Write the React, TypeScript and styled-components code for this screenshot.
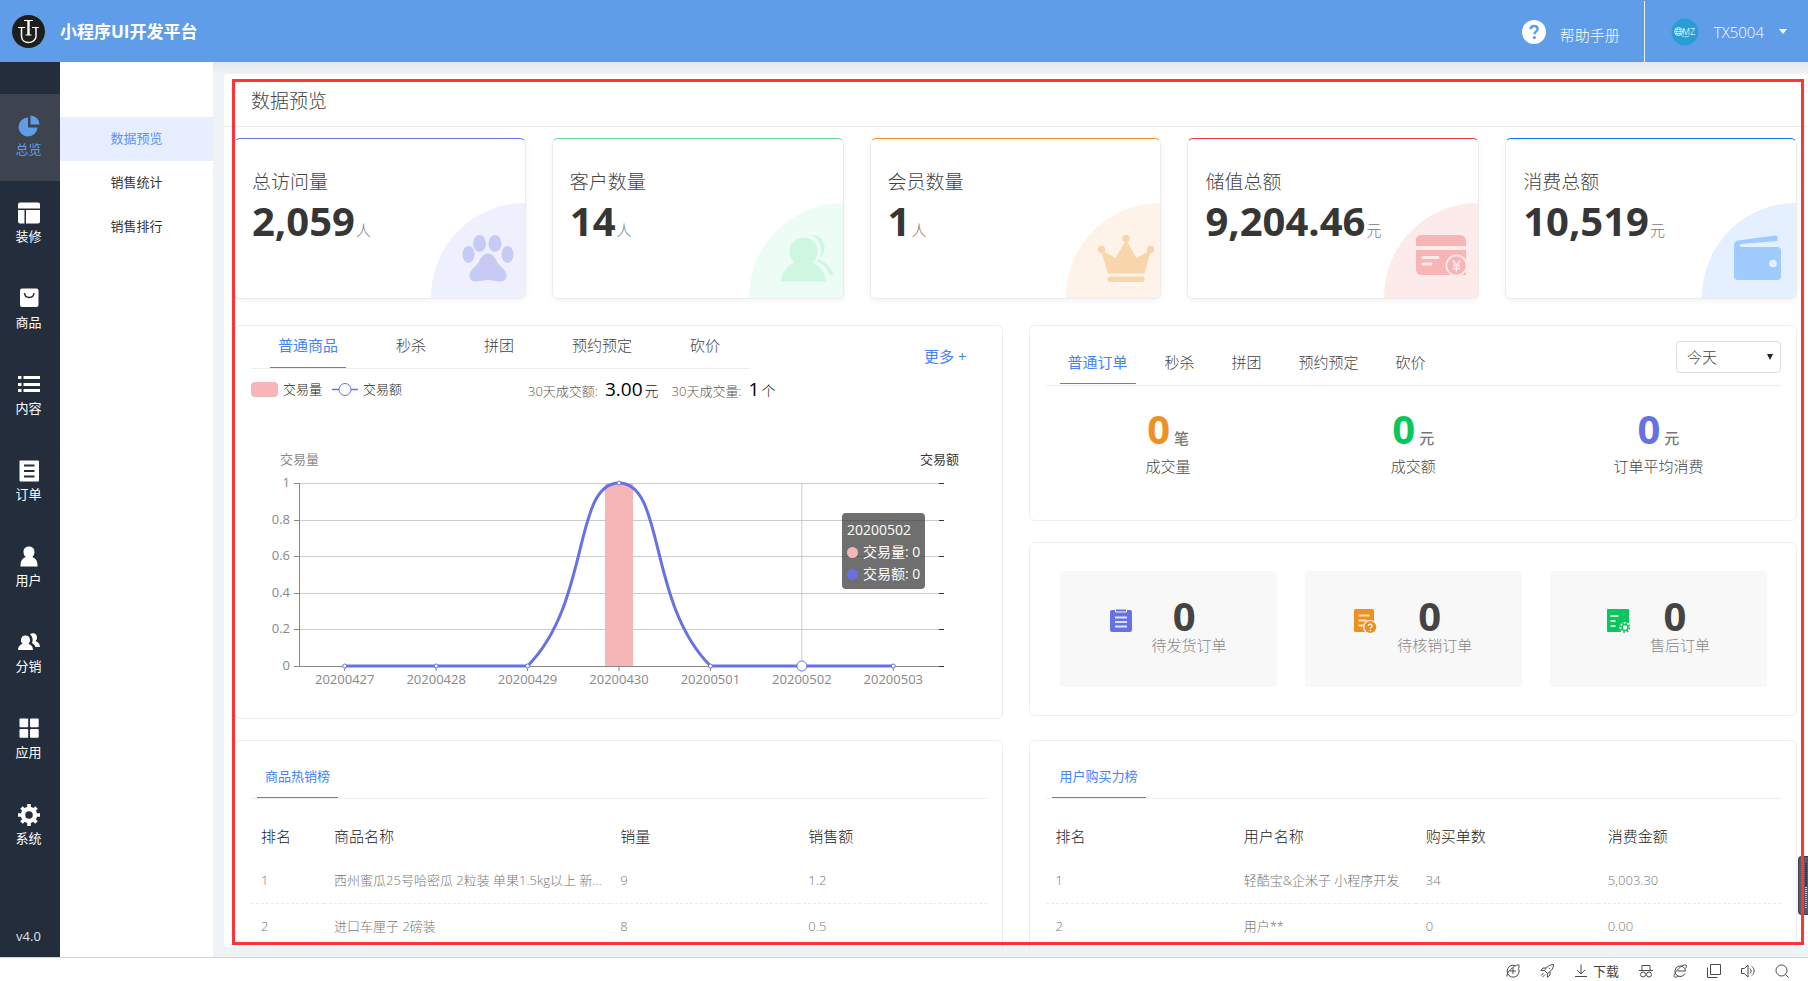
import React from 'react';
import styled, { createGlobalStyle } from 'styled-components';

const GlobalStyle = createGlobalStyle`
  * { box-sizing: border-box; }
  body {
    margin: 0;
    background: #fff;
    color: #333;
    font-family: 'Open Sans', 'Noto Sans CJK SC', sans-serif;
    font-size: 13px;
    font-weight: 300;
    line-height: 20px;
  }
  button, select { font: inherit; color: inherit; }
  a { text-decoration: none; color: inherit; }
  h1, h2, p { margin: 0; font-weight: inherit; }
`;

const Page = styled.div`
  display: flex;
  flex-direction: column;
  height: 100vh;
  min-width: 1200px;
  overflow: hidden;
`;

/* ---------- header ---------- */

const Header = styled.header`
  display: flex;
  align-items: center;
  flex: none;
  height: 62px;
  padding: 1px 21px 0 12px;
  background: #5f9de9;
  color: #fff;
`;

const BrandName = styled.h1`
  margin-left: 15px;
  font-size: 17px;
  font-weight: 700;
  line-height: 24px;
`;

const HelpLink = styled.a`
  display: flex;
  align-items: center;
  gap: 14px;
  height: 61px;
  margin-left: auto;
  padding-right: 24px;
  border-right: 1px solid #e9f1fb;
  font-size: 15px;
`;

const HelpText = styled.span`
  padding-top: 6px;
`;

const AccountButton = styled.button`
  display: flex;
  align-items: center;
  gap: 15px;
  height: 61px;
  padding: 0 0 0 26px;
  border: 0;
  background: none;
  font-size: 15px;
  color: #fff;
`;

const Caret = styled.span`
  border: 4px solid transparent;
  border-top: 5px solid #fff;
  border-bottom: 0;
`;

/* ---------- body columns ---------- */

const Body = styled.div`
  display: flex;
  flex: 1;
  min-height: 0;
`;

const Rail = styled.nav`
  display: flex;
  flex-direction: column;
  flex: none;
  width: 60px;
  padding-top: 32px;
  background: #242d3c;
  color: #fff;
`;

const RailItem = styled.a<{ $active?: boolean }>`
  display: flex;
  flex-direction: column;
  align-items: center;
  height: ${p => (p.$active ? 87 : 86)}px;
  padding: 20px 3px 0 0;
  font-weight: 400;
  background: ${p => (p.$active ? '#3e444f' : 'transparent')};
  color: ${p => (p.$active ? '#5f9de9' : '#fff')};
`;

const Version = styled.span`
  margin-top: auto;
  padding: 0 3px 11px 0;
  text-align: center;
  font-weight: 400;
  color: #dfe3ea;
`;

const SubMenu = styled.nav`
  flex: none;
  width: 153px;
  padding-top: 55px;
  background: #fff;
`;

const SubItem = styled.a<{ $active?: boolean }>`
  display: block;
  padding-bottom: 2px;
  line-height: 42px;
  text-align: center;
  font-weight: 400;
  background: ${p => (p.$active ? '#e7eeff' : 'transparent')};
  color: ${p => (p.$active ? '#5a94f9' : '#333')};
`;

const Main = styled.main`
  position: relative;
  flex: 1;
  min-width: 0;
  padding: 12px 0 10px 11px;
  background: linear-gradient(#e4e8ea, #eff3f5 12px);
`;

const Sheet = styled.div`
  height: 100%;
  overflow: hidden;
  border-radius: 4px;
  background: #fff;
`;

const Frame = styled.div`
  position: absolute;
  top: 17px;
  right: 4px;
  bottom: 12px;
  left: 19px;
  border: 3px solid #ff3434;
  pointer-events: none;
`;

const SideHandle = styled.div`
  position: absolute;
  right: 0;
  bottom: 42px;
  width: 10px;
  height: 59px;
  border: 1px solid #3a3f4c;
  border-right: 0;
  border-radius: 4px 0 0 4px;
  background: #565c6c;
`;

const SideBars = styled.div`
  width: 2px;
  height: 46px;
  margin: 6px 0 0 6px;
  background: repeating-linear-gradient(transparent 0 1px, #4a5060 1px 2px),
    linear-gradient(#2f3440 0 24px, #d6dc7c 24px 32px, #6fd6b4 32px);
`;

const SheetTitle = styled.h2`
  height: 53px;
  padding-left: 27px;
  border-bottom: 1px solid #ebebeb;
  font-size: 19px;
  line-height: 54px;
  color: #444;
`;

const Content = styled.div`
  padding: 11px 11px 0 10px;
`;

/* ---------- metric cards ---------- */

const MetricGrid = styled.div`
  display: grid;
  grid-template-columns: repeat(5, 1fr);
  gap: 26px;
`;

const MetricCard = styled.section<{ $accent: string }>`
  display: flex;
  height: 161px;
  padding-left: 17px;
  overflow: hidden;
  border: 1px solid #ececec;
  border-top-color: ${p => p.$accent};
  border-radius: 6px;
  box-shadow: 0 2px 6px rgba(0, 0, 0, 0.05);
`;

const MetricBody = styled.div`
  padding-top: 29px;
  white-space: nowrap;
`;

const MetricName = styled.p`
  font-size: 19px;
  line-height: 28px;
  color: #444;
`;

const BigNumber = styled.span<{ $color?: string }>`
  font-size: 40px;
  font-weight: 700;
  line-height: 50px;
  color: ${p => p.$color || '#363636'};
`;

const Unit = styled.span`
  margin-left: 1px;
  font-size: 15px;
  color: #777;
`;

const Quarter = styled.div<{ $tint: string }>`
  display: flex;
  align-items: flex-start;
  justify-content: flex-end;
  flex: none;
  align-self: flex-end;
  width: 94px;
  height: 95px;
  margin-left: auto;
  padding: 31px 5px 0 0;
  border-top-left-radius: 95px;
  background: ${p => p.$tint};
`;

/* ---------- panels ---------- */

const Columns = styled.div`
  display: grid;
  grid-template-columns: repeat(2, minmax(0, 1fr));
  align-items: start;
  gap: 21px 26px;
  margin-top: 26px;
`;

const Stack = styled.div`
  display: grid;
  gap: 21px;
`;

const Panel = styled.section<{ $height?: number }>`
  min-height: ${p => p.$height || 0}px;
  padding: 0 15px 0 16px;
  border: 1px solid #ededed;
  border-radius: 6px;
  background: #fff;
`;

const PanelHead = styled.div`
  display: flex;
  align-items: center;
  justify-content: space-between;
  padding-right: 20px;
`;

const TabList = styled.div<{ $gap: number; $lead: number; $width?: string }>`
  display: flex;
  align-items: flex-end;
  gap: ${p => p.$gap}px;
  width: ${p => p.$width || '100%'};
  padding-left: ${p => p.$lead}px;
  border-bottom: 1px solid #ededed;
`;

const Tab = styled.button<{ $active?: boolean; $height: number; $small?: boolean }>`
  height: ${p => p.$height}px;
  padding: ${p => (p.$small ? '14px 8px 0' : '0 8px 4px')};
  border: 0;
  border-bottom: 1px solid ${p => (p.$active ? '#4285f4' : 'transparent')};
  background: none;
  font-size: ${p => (p.$small ? 13 : 15)}px;
  font-weight: ${p => (p.$active ? 400 : 300)};
  line-height: 20px;
  white-space: nowrap;
  color: ${p => (p.$active ? '#4285f4' : '#444')};
`;

const MoreLink = styled.a`
  padding-top: 17px;
  font-size: 15px;
  font-weight: 400;
  color: #4285f4;
`;

const LegendRow = styled.div`
  display: flex;
  align-items: center;
  height: 42px;
  padding-bottom: 2px;
  white-space: nowrap;
`;

const LegendKey = styled.span`
  display: flex;
  align-items: center;
  gap: 5px;
  margin-right: 10px;
  color: #222;
`;

const Swatch = styled.i`
  width: 27px;
  height: 15px;
  border-radius: 4px;
  background: #f6b5b6;
`;

const Summary = styled.p`
  display: flex;
  align-items: baseline;
  margin-left: 116px;
  padding-top: 2px;
  color: #555;
`;

const SummaryValue = styled.b`
  margin: 0 2px 0 7px;
  font-size: 19px;
  font-weight: 400;
  color: #000;
`;

const SummaryUnit = styled.span`
  margin-right: 13px;
  font-size: 14px;
  color: #222;
`;

const ChartBox = styled.div`
  position: relative;
`;

const ChartSvg = styled.svg`
  display: block;
  width: 735px;
  max-width: 100%;
  font-family: 'Open Sans', 'Noto Sans CJK SC', sans-serif;
  font-size: 13px;
  font-weight: 400;
`;

const Tooltip = styled.div`
  position: absolute;
  top: 102px;
  left: 591px;
  padding: 6px 5px 4px;
  border-radius: 4px;
  background: rgba(50, 50, 50, 0.7);
  font-size: 14px;
  font-weight: 400;
  line-height: 22px;
  white-space: nowrap;
  color: #fff;
`;

const TipLine = styled.div`
  display: flex;
  align-items: center;
  gap: 5px;
`;

const Dot = styled.i<{ $color: string }>`
  width: 11px;
  height: 11px;
  border-radius: 50%;
  background: ${p => p.$color};
`;

/* ---------- order panels ---------- */

const OrderHead = styled.div`
  display: flex;
  align-items: flex-start;
  justify-content: space-between;
  height: 60px;
  padding-top: 15px;
  border-bottom: 1px solid #ededed;
`;

const OrderTabs = styled.div`
  display: flex;
  gap: 21px;
  padding: 3px 0 0 14px;
`;

const RangeSelect = styled.select`
  width: 105px;
  height: 32px;
  padding: 0 10px;
  appearance: none;
  border: 1px solid #dcdfe0;
  border-radius: 4px;
  background: transparent;
  font-size: 15px;
  color: #444;
`;

const SelectWrap = styled.label`
  position: relative;
  &::after {
    content: '';
    position: absolute;
    top: 13px;
    right: 8px;
    border: 3px solid transparent;
    border-top: 6px solid #222;
    border-bottom: 0;
  }
`;

const Thirds = styled.div`
  display: grid;
  grid-template-columns: repeat(3, 1fr);
`;

const OrderStat = styled.div`
  padding-top: 18px;
  text-align: center;
  font-size: 15px;
  color: #444;
`;

const StatLabel = styled.p`
  margin-top: 2px;
`;

const StatUnit = styled.span`
  margin-left: 4px;
  font-weight: 500;
  color: #777;
`;

const Tile = styled.div`
  display: flex;
  align-items: flex-start;
  justify-content: center;
  gap: 20px;
  height: 116px;
  margin: 28px 14px 0;
  padding-top: 26px;
  border-radius: 4px;
  background: #f8f8f8;
  svg { margin-top: 11px; }
`;

const TileText = styled.div`
  text-align: center;
  font-size: 15px;
  line-height: 20px;
  color: #888;
`;

const TileNumber = styled.div`
  padding-right: 10px;
  font-size: 40px;
  font-weight: 700;
  line-height: 38px;
  color: #444;
`;

/* ---------- tables ---------- */

const Table = styled.table`
  width: 100%;
  margin-top: 15px;
  border-collapse: collapse;
  table-layout: fixed;
  color: #777;

  th, td {
    height: 45px;
    padding: 0 0 0 10px;
    overflow: hidden;
    text-align: left;
    text-overflow: ellipsis;
    white-space: nowrap;
    font-weight: 300;
  }
  th {
    height: 44px;
    font-size: 15px;
    color: #222;
  }
  td { border-bottom: 1px dashed #ebebeb; }
`;

/* ---------- bottom bar ---------- */

const StatusBar = styled.footer`
  display: flex;
  align-items: center;
  justify-content: flex-end;
  flex: none;
  gap: 20px;
  height: 24px;
  padding: 2px 19px 0 0;
  border-top: 1px solid #d0d4d6;
  background: #fff;
  color: #444;
  svg { display: block; }
`;

const ToolButton = styled.button`
  display: flex;
  align-items: center;
  gap: 5px;
  padding: 0;
  border: 0;
  background: none;
  font-weight: 400;
  line-height: 20px;
`;

/* ---------- icons ---------- */

const Logo = () => (
  <svg width="33" height="33" viewBox="0 0 33 33" aria-label="UI">
    <circle cx="16.5" cy="16.5" r="16.5" fill="#1e1e1e" />
    <g fill="none" stroke="#fff">
      <path d="M12 5.500h9M13.500 20h6" strokeWidth="1" />
      <path d="M16.500 5.500v14.500" strokeWidth="2.400" />
      <path d="M6 12.500h7M20 12.500h7" strokeWidth="1" />
      <path d="M9.500 12.500v8.500c0 4 3 6.500 7 6.500s7.500-2.500 7.500-6.500v-8.500" strokeWidth="1.500" />
    </g>
  </svg>
);

const HelpIcon = () => (
  <svg width="24" height="24" viewBox="0 0 24 24">
    <circle cx="12" cy="12" r="12" fill="#fff" />
    <path d="M8.600 9.300c0-2 1.400-3.300 3.500-3.300s3.500 1.200 3.500 3c0 2.300-3.100 2.500-3.100 5.200" fill="none" stroke="#5f9de9" strokeWidth="2.400" />
    <circle cx="12.400" cy="17.600" r="1.600" fill="#5f9de9" />
  </svg>
);

const Avatar = () => (
  <svg width="28" height="28" viewBox="0 0 28 28">
    <circle cx="14" cy="14" r="13.500" fill="#2a9cd6" />
    <g fill="none" stroke="#d5edf8" strokeWidth=".8">
      <circle cx="7.500" cy="13.500" r="4" />
      <ellipse cx="7.500" cy="13.500" rx="1.800" ry="4" />
      <path d="M3.500 13.500h8M4.200 11.500h6.600M4.200 15.500h6.600M9.500 16.500c2 2.800 6 2.800 8.500 1.500" />
    </g>
    <text x="11" y="17" fontSize="9" fill="#d5edf8" fontFamily="Open Sans, sans-serif" fontWeight="400">MZ</text>
  </svg>
);

const railIcons: Record<string, React.ReactNode> = {
  总览: <><path d="M11 3.500v10h9.500a9.500 9.500 0 1 1-9.500-10z" /><path d="M13.500 1.500a9 9 0 0 1 9 9h-9z" /></>,
  装修: <><path d="M3 1.500h18a2 2 0 0 1 2 2V7.500H1V3.500a2 2 0 0 1 2-2z" /><path d="M1 9h6.500v13.500H3a2 2 0 0 1-2-2zM9 9h14v11.500a2 2 0 0 1-2 2H9z" /></>,
  商品: <><rect x="3" y="1.500" width="18.500" height="18.500" rx="2" /><path d="M7.500 6c.5 6 9 6 9.500 0" fill="none" stroke="#242d3c" strokeWidth="1.500" /></>,
  内容: <path d="M1 3h3.500v3H1zM6.500 3H23v3H6.500zM1 10h3.500v3H1zM6.500 10H23v3H6.500zM1 16h3.500v3H1zM6.500 16H23v3H6.500z" />,
  订单: <><rect x="2.500" y="1.500" width="19.500" height="21" rx="1" /><path d="M7 6.500h10.500M7 12h10.500M7 17.500h10.500" stroke="#242d3c" strokeWidth="2" /></>,
  用户: <path d="M12 1.500c3.500 0 5.500 2.300 5.500 5.500 0 2.200-.8 4-2.200 5 3.500 1.200 5.200 4.300 5.200 7.500V21.500h-17v-2c0-3.200 1.700-6.300 5.200-7.500C7.300 11 6.500 9.200 6.500 7c0-3.200 2-5.500 5.500-5.500z" />,
  分销: <><path d="M8.500 4.500c3 0 4.500 2 4.500 4.500 0 1.600-.6 3-1.600 3.800 2.800 1 4.600 3.200 4.600 6.200H1c0-3 1.800-5.200 4.600-6.200C4.600 12 4 10.600 4 9c0-2.500 1.500-4.500 4.500-4.500z" /><path d="M13 3.500c1-1 2-1.200 3-1.200 2.600 0 4 1.800 4 4.200 0 1.500-.5 2.800-1.500 3.500 2.700.9 4.500 3.200 4.500 6h-4.500c-.6-1.700-1.800-3-3.500-4 1.200-2.500.8-6.500-2-8.500z" /></>,
  应用: <><rect x="2.500" y="1.500" width="8.700" height="8.700" rx="1" /><rect x="13" y="1.500" width="8.700" height="8.700" rx="1" /><rect x="2.500" y="12" width="8.700" height="8.700" rx="1" /><rect x="13" y="12" width="8.700" height="8.700" rx="1" /></>,
  系统: <><circle cx="12" cy="12" r="6" fill="none" stroke="currentColor" strokeWidth="4.500" /><path d="M12 1v4M12 19v4M1 12h4M19 12h4M4.500 4.500l3 3M16.500 16.500l3 3M4.500 19.500l3-3M16.500 7.500l3-3" stroke="currentColor" strokeWidth="3.600" /></>,
};

const Paw = () => (
  <svg width="58" height="48" viewBox="0 0 58 48" fill="#c8caf6">
    <ellipse cx="6.500" cy="20.500" rx="6" ry="8.500" />
    <ellipse cx="17.500" cy="9.500" rx="6.500" ry="8.500" />
    <ellipse cx="33" cy="9.500" rx="6.500" ry="8.500" />
    <ellipse cx="45.500" cy="20.500" rx="6" ry="8.500" />
    <path d="M26 19.500c4 0 6.500 3 9 8 3 5.500 9.500 8.500 9.500 14 0 3.500-2.500 6-6 6-5 0-8-1.500-12.500-1.500S18.500 47.500 13.500 47.500c-3.500 0-6-2.500-6-6 0-5.500 6.500-8.500 9.500-14 2.500-5 5-8 9-8z" />
  </svg>
);

const Customers = () => (
  <svg width="58" height="48" viewBox="0 0 58 48" fill="#cff6e0">
    <path d="M24 3.500c8 0 13.500 6 13.500 13.500 0 5-2 9-5 11.500 7.500 3 12.500 10 13.500 19H1c1-9 6-16 13.500-19-3-2.500-5-6.500-5-11.500C9.500 9.500 16 3.500 24 3.500z" />
    <path d="M31 .8C39 1 44.500 6 44.500 13c0 4.500-1.500 8.500-4.500 11 2.500-9 1-18-9-23.200zM38 25c8 3 13.500 9 15.500 16h-4C47.500 34.500 43.500 30 37 28z" />
  </svg>
);

const Crown = () => (
  <svg width="58" height="49" viewBox="0 0 58 49" fill="#f9d5ab">
    <circle cx="29" cy="4.500" r="3.700" /><circle cx="4.500" cy="15.500" r="3.700" /><circle cx="53.500" cy="15.500" r="3.700" />
    <path d="M29 6l10.500 18L54 16l-6 22a2 2 0 0 1-2 1.500H12.500a2 2 0 0 1-2-1.500L4 16l14.500 8z" />
    <rect x="10.500" y="42.500" width="37" height="5.500" rx="2.700" />
  </svg>
);

const BankCard = () => (
  <svg width="58" height="48" viewBox="0 0 58 48" fill="#f8b5b5">
    <path d="M6 1h39a6 6 0 0 1 6 6v5H1V7a5 5 0 0 1 5-6zM1 16h50v25H6a5 5 0 0 1-5-5z" />
    <path d="M8 23.500h15M8 30h8" stroke="#fdeaea" strokeWidth="3" strokeLinecap="round" />
    <circle cx="41.500" cy="31.500" r="11" fill="#fdeaea" /><circle cx="41.500" cy="31.500" r="9.200" />
    <path d="M38 26.500l3.500 5 3.500-5M41.500 31.500v6M38 31.500h7M38 34.500h7" fill="none" stroke="#fdeaea" strokeWidth="1.700" />
  </svg>
);

const Wallet = () => (
  <svg width="58" height="48" viewBox="0 0 58 48" fill="#9fcbff">
    <path d="M5 6.500L42 1.500c1.500-.2 2.500.7 2.500 2V7L8 10c-2 .3-2 2.500.5 3H44a4 4 0 0 1 4 4v25a4 4 0 0 1-4 4H5a4 4 0 0 1-4-4V11c0-2.500 1.500-4.200 4-4.500z" />
    <circle cx="40" cy="29.500" r="3.800" fill="#e4f0ff" />
  </svg>
);

const Clipboard = () => (
  <svg width="22" height="26" viewBox="0 0 22 26">
    <rect x="0" y="2" width="22" height="22" rx="2" fill="#6672e4" />
    <path d="M5.500 1h11v3h-11z" fill="#6672e4" stroke="#f8f8f8" />
    <path d="M5 9.500h12M5 14h12M5 18.500h12" stroke="#dfe2fb" strokeWidth="1.800" />
  </svg>
);

const VerifyDoc = () => (
  <svg width="23" height="26" viewBox="0 0 23 26">
    <rect x="0" y="1" width="20" height="23" rx="1.500" fill="#ef9022" />
    <path d="M4.500 7.500h11M4.500 12.500h8M4.500 17.500h5" stroke="#fbe3c8" strokeWidth="1.800" />
    <circle cx="16" cy="19" r="7" fill="#f8f8f8" /><circle cx="16.300" cy="19" r="6" fill="#ef9022" />
    <path d="M14.300 18c0-2.500 3.800-2.500 3.800 0 0 1.400-1.800 1.300-1.800 2.800M16.300 22v1.200" fill="none" stroke="#fff" strokeWidth="1.200" />
  </svg>
);

const ServiceDoc = () => (
  <svg width="23" height="26" viewBox="0 0 23 26">
    <rect x="0" y="1" width="22" height="23" rx="1" fill="#08c75c" />
    <path d="M3.500 8h8M3.500 13h5M3.500 18h5" stroke="#c8f3da" strokeWidth="1.800" />
    <circle cx="18" cy="19.500" r="5.500" fill="#f8f8f8" />
    <circle cx="18" cy="19.500" r="3" fill="none" stroke="#08c75c" strokeWidth="1.600" />
    <circle cx="18" cy="19.500" r="4.600" fill="none" stroke="#08c75c" strokeWidth="1.600" strokeDasharray="1.800 1.800" />
  </svg>
);

const Tool = ({ children }: { children: React.ReactNode }) => (
  <svg width="14" height="14" viewBox="0 0 14 14" fill="none" stroke="#4a4a4a" strokeWidth="1">{children}</svg>
);

/* ---------- data ---------- */

const metrics = [
  { name: '总访问量', value: '2,059', unit: '人', accent: '#6772dd', tint: '#eef0fd', icon: <Paw /> },
  { name: '客户数量', value: '14', unit: '人', accent: '#63dd98', tint: '#edfcf4', icon: <Customers /> },
  { name: '会员数量', value: '1', unit: '人', accent: '#ef9022', tint: '#fdf3e9', icon: <Crown /> },
  { name: '储值总额', value: '9,204.46', unit: '元', accent: '#e83c3c', tint: '#fdeaea', icon: <BankCard /> },
  { name: '消费总额', value: '10,519', unit: '元', accent: '#0f7bf2', tint: '#e4f0ff', icon: <Wallet /> },
];

const days = ['20200427', '20200428', '20200429', '20200430', '20200501', '20200502', '20200503'];
const plot = { left: 48, right: 688, top: 72, bottom: 255 };
const step = (plot.right - plot.left) / days.length;
const dayX = (i: number) => plot.left + step * (i + 0.5);
const ticks = ['1', '0.8', '0.6', '0.4', '0.2', '0'];
const tickY = (i: number) => Math.round(plot.top + ((plot.bottom - plot.top) * i) / 5) + 0.5;

const Chart = () => {
  const base = plot.bottom;
  const peak = dayX(3);
  return (
    <ChartSvg viewBox="0 0 735 306" role="img" aria-label="交易量 交易额">
      <text x="29" y="53" fill="#888">交易量</text>
      <text x="669" y="53" fill="#333">交易额</text>
      {ticks.map((t, i) => (
        <g key={t}>
          <path d={`M${plot.left} ${tickY(i)}H${plot.right}`} stroke={i === 5 ? '#888' : '#ccc'} />
          <path d={`M${plot.left - 5} ${tickY(i)}h5`} stroke="#888" />
          <path d={`M${plot.right} ${tickY(i)}h5`} stroke="#333" />
          <text x="39" y={tickY(i) + 3} textAnchor="end" fill="#888">{t}</text>
        </g>
      ))}
      <path d={`M${plot.left + 0.5} ${plot.top}V${base}`} stroke="#888" />
      <path d={`M${dayX(5)} ${plot.top}V${base}`} stroke="#ccc" />
      <rect x={peak - 14} y={plot.top} width="28" height={base - plot.top} fill="#f6b5b6" />
      {days.map((d, i) => (
        <g key={d}>
          <path d={`M${dayX(i)} ${base}v5`} stroke="#888" />
          <text x={dayX(i)} y="273" textAnchor="middle" fill="#888">{d}</text>
        </g>
      ))}
      <path
        d={`M${dayX(0)} ${base}H${dayX(2)}C${dayX(2) + 63} ${base - 63} ${peak - 46} ${plot.top} ${peak} ${plot.top}S${dayX(4) - 63} ${base - 63} ${dayX(4)} ${base}H${dayX(6)}`}
        fill="none" stroke="#6672e4" strokeWidth="3"
      />
      {days.map((d, i) => (
        <circle key={d} cx={dayX(i)} cy={i === 3 ? plot.top : base} r={i === 5 ? 5 : 2} fill="#fff" stroke="#6672e4" />
      ))}
    </ChartSvg>
  );
};

const goods = [
  ['1', '西州蜜瓜25号哈密瓜 2粒装 单果1.5kg以上 新...', '9', '1.2'],
  ['2', '进口车厘子 2磅装', '8', '0.5'],
];
const buyers = [
  ['1', '轻酷宝&企米子 小程序开发', '34', '5,003.30'],
  ['2', '用户**', '0', '0.00'],
];

const Ranking = ({ head, rows, widths }: { head: string[]; rows: string[][]; widths: number[] }) => (
  <Table>
    <colgroup>{widths.map((w, i) => <col key={i} width={w} />)}</colgroup>
    <thead><tr>{head.map(h => <th key={h} scope="col">{h}</th>)}</tr></thead>
    <tbody>{rows.map(r => <tr key={r[0]}>{r.map((c, i) => <td key={i}>{c}</td>)}</tr>)}</tbody>
  </Table>
);

export default function App() {
  return (
    <Page>
      <GlobalStyle />
      <Header>
        <Logo />
        <BrandName>小程序UI开发平台</BrandName>
        <HelpLink href="#help"><HelpIcon /><HelpText>帮助手册</HelpText></HelpLink>
        <AccountButton type="button"><Avatar />TX5004<Caret /></AccountButton>
      </Header>

      <Body>
        <Rail>
          {Object.entries(railIcons).map(([label, icon], i) => (
            <RailItem key={label} href="#" $active={i === 0}>
              <svg width="24" height="25" viewBox="0 0 24 25" fill="currentColor">{icon}</svg>
              {label}
            </RailItem>
          ))}
          <Version>v4.0</Version>
        </Rail>
        <SubMenu>
          <SubItem href="#" $active>数据预览</SubItem>
          <SubItem href="#">销售统计</SubItem>
          <SubItem href="#">销售排行</SubItem>
        </SubMenu>

        <Main>
          <Sheet>
            <SheetTitle>数据预览</SheetTitle>
            <Content>
              <MetricGrid>
                {metrics.map(m => (
                  <MetricCard key={m.name} $accent={m.accent}>
                    <MetricBody>
                      <MetricName>{m.name}</MetricName>
                      <BigNumber>{m.value}</BigNumber><Unit>{m.unit}</Unit>
                    </MetricBody>
                    <Quarter $tint={m.tint}>{m.icon}</Quarter>
                  </MetricCard>
                ))}
              </MetricGrid>

              <Columns>
                <Panel $height={394}>
                  <PanelHead>
                    <TabList $gap={42} $lead={19} $width="499px">
                      {['普通商品', '秒杀', '拼团', '预约预定', '砍价'].map((t, i) => (
                        <Tab key={t} type="button" $height={42} $active={i === 0}>{t}</Tab>
                      ))}
                    </TabList>
                    <MoreLink href="#more">更多 +</MoreLink>
                  </PanelHead>
                  <LegendRow>
                    <LegendKey><Swatch />交易量</LegendKey>
                    <LegendKey>
                      <svg width="26" height="14" viewBox="0 0 26 14" fill="#fff" stroke="#6672e4">
                        <path d="M0 7.500h26" strokeWidth="1.500" /><circle cx="13" cy="7.500" r="6" />
                      </svg>
                      交易额
                    </LegendKey>
                    <Summary>
                      30天成交额:<SummaryValue>3.00</SummaryValue><SummaryUnit>元</SummaryUnit>
                      30天成交量:<SummaryValue>1</SummaryValue><SummaryUnit>个</SummaryUnit>
                    </Summary>
                  </LegendRow>
                  <ChartBox>
                    <Chart />
                    <Tooltip>
                      20200502
                      <TipLine><Dot $color="#f6b5b6" />交易量: 0</TipLine>
                      <TipLine><Dot $color="#6672e4" />交易额: 0</TipLine>
                    </Tooltip>
                  </ChartBox>
                </Panel>

                <Stack>
                  <Panel $height={196}>
                    <OrderHead>
                      <OrderTabs>
                        {['普通订单', '秒杀', '拼团', '预约预定', '砍价'].map((t, i) => (
                          <Tab key={t} type="button" $height={40} $active={i === 0}>{t}</Tab>
                        ))}
                      </OrderTabs>
                      <SelectWrap>
                        <RangeSelect aria-label="时间范围" defaultValue="today">
                          <option value="today">今天</option>
                        </RangeSelect>
                      </SelectWrap>
                    </OrderHead>
                    <Thirds>
                      <OrderStat><BigNumber $color="#ef9022">0</BigNumber><StatUnit>笔</StatUnit><StatLabel>成交量</StatLabel></OrderStat>
                      <OrderStat><BigNumber $color="#08c75c">0</BigNumber><StatUnit>元</StatUnit><StatLabel>成交额</StatLabel></OrderStat>
                      <OrderStat><BigNumber $color="#6672e4">0</BigNumber><StatUnit>元</StatUnit><StatLabel>订单平均消费</StatLabel></OrderStat>
                    </Thirds>
                  </Panel>
                  <Panel $height={174}>
                    <Thirds>
                      <Tile><Clipboard /><TileText><TileNumber>0</TileNumber>待发货订单</TileText></Tile>
                      <Tile><VerifyDoc /><TileText><TileNumber>0</TileNumber>待核销订单</TileText></Tile>
                      <Tile><ServiceDoc /><TileText><TileNumber>0</TileNumber>售后订单</TileText></Tile>
                    </Thirds>
                  </Panel>
                </Stack>

                <Panel $height={300}>
                  <TabList $gap={0} $lead={6}>
                    <Tab type="button" $small $active $height={57}>商品热销榜</Tab>
                  </TabList>
                  <Ranking head={['排名', '商品名称', '销量', '销售额']} rows={goods} widths={[73, 286, 188, 188]} />
                </Panel>
                <Panel $height={300}>
                  <TabList $gap={0} $lead={6}>
                    <Tab type="button" $small $active $height={57}>用户购买力榜</Tab>
                  </TabList>
                  <Ranking head={['排名', '用户名称', '购买单数', '消费金额']} rows={buyers} widths={[188, 182, 182, 183]} />
                </Panel>
              </Columns>
            </Content>
          </Sheet>
          <SideHandle><SideBars /></SideHandle>
          <Frame />
        </Main>
      </Body>

      <StatusBar>
        <ToolButton type="button" aria-label="加速"><Tool><path d="M12.500 4.500A6 6 0 1 1 9 1.500M7 4v6M4 7h6M1 12.500C0 9 8 1 12.500.8c1 .2.800 1.700 0 3.700" /></Tool></ToolButton>
        <ToolButton type="button" aria-label="火箭"><Tool><path d="M13.500.5C9.500.5 6.500 3 4.500 6.500l3 3C11 7.500 13.500 4.500 13.500.5zM6 4H3L.8 6.500l3.700.2M10 8v3l-2.500 2.200-.2-3.700M3.500 9L1 11.500M5 10.500L2.500 13M9 3.800l1.300 1.300" /></Tool></ToolButton>
        <ToolButton type="button"><Tool><path d="M7 .5v9M3 6l4 4 4-4M1 12.500h12" /></Tool>下载</ToolButton>
        <ToolButton type="button" aria-label="无痕"><Tool><path d="M3 6V1.500h8V6M0 6.500h14" /><circle cx="4" cy="10.500" r="2.500" /><circle cx="10" cy="10.500" r="2.500" /></Tool></ToolButton>
        <ToolButton type="button" aria-label="浏览器"><Tool><path d="M12 9.500A5.300 5.300 0 1 1 12.500 7H4.500M1.500 13C-1 11 8 0 13 1c1 .3.500 2-.5 3.500M1.500 13c1 .5 2.500 0 4-1" /></Tool></ToolButton>
        <ToolButton type="button" aria-label="窗口"><Tool><path d="M3.500.5h10v10h-10zM.5 3.500v10h10" /></Tool></ToolButton>
        <ToolButton type="button" aria-label="声音"><Tool><path d="M.5 4.500h2.800L7 1v12L3.300 9.500H.5zM9 4.500c1.500 1.500 1.500 3.500 0 5M11 2.500c2.800 2.500 2.800 6.500 0 9" /></Tool></ToolButton>
        <ToolButton type="button" aria-label="搜索"><Tool><circle cx="6.500" cy="6.500" r="5.500" /><path d="M10.500 10.500l3 3" /></Tool></ToolButton>
      </StatusBar>
    </Page>
  );
}
